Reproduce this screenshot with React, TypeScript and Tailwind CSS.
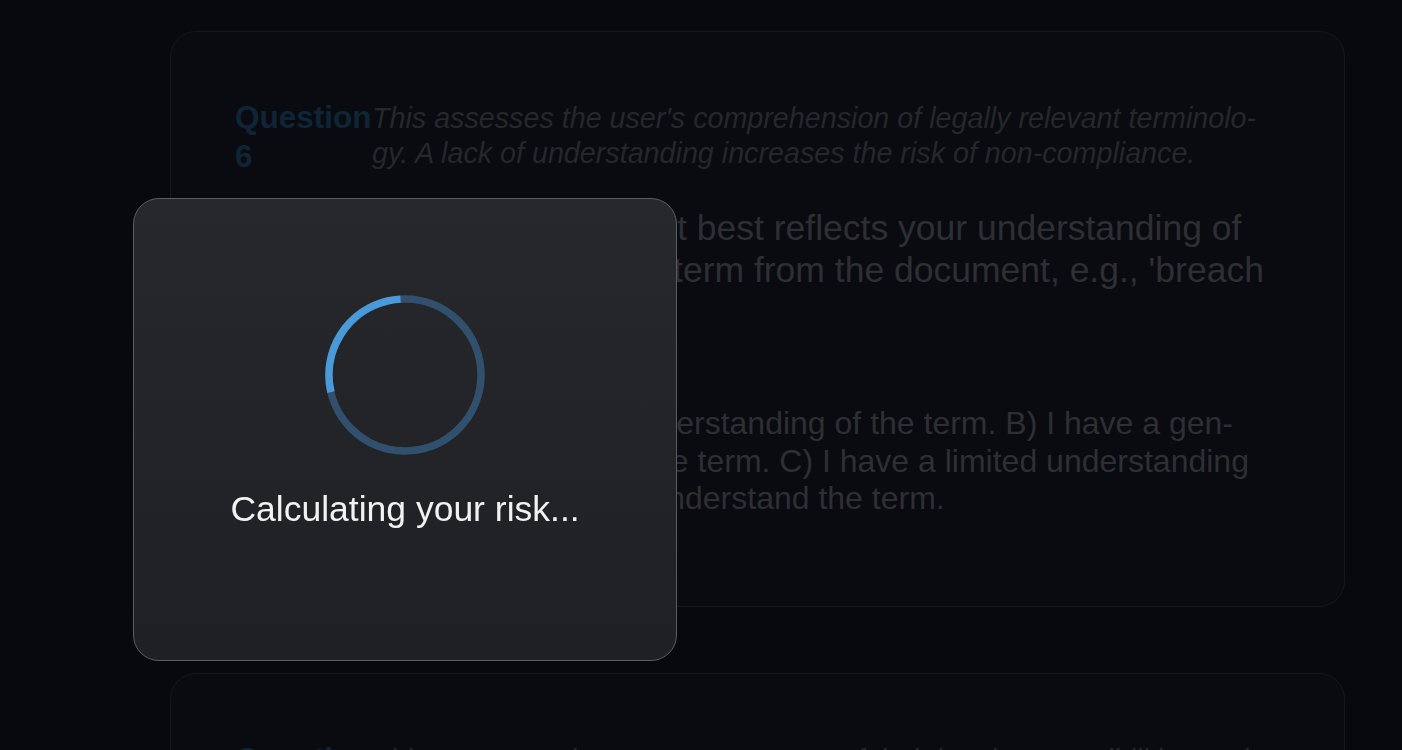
import React from 'react';

function Spinner() {
  return (
    <svg width="164" height="164" viewBox="0 0 164 164">
      <circle cx="82" cy="82" r="76" fill="none" stroke="#31506e" strokeWidth="7.5" />
      <circle
        cx="82"
        cy="82"
        r="76"
        fill="none"
        stroke="#4a9ad9"
        strokeWidth="7.5"
        strokeDasharray="132 1000"
        transform="rotate(167 82 82)"
      />
    </svg>
  );
}

interface QuestionCardProps {
  number: number;
  note: string;
  question: string;
  options: string;
}

function QuestionCard({ number, note, question, options }: QuestionCardProps) {
  return (
    <div className="rounded-[26px] border border-[#15171c] bg-[#090b10] pt-[66px] pl-16 pr-[71px] pb-[88px]">
      <div className="flex items-baseline">
        <div className="w-[137px] shrink-0 text-[31.5px] font-bold leading-[39px] text-[#0f2536]">
          Question {number}
        </div>
        <p className="min-w-0 flex-1 text-[28.7px] italic leading-[35px] text-[#25272b]">{note}</p>
      </div>
      <p className="mt-[31px] text-[35.5px] leading-[42px] text-[#2d2f33]">{question}</p>
      <p className="mt-[72px] text-[32px] leading-[37.5px] text-[#2d2f33]">{options}</p>
    </div>
  );
}

export default function App() {
  return (
    <div className="min-h-screen overflow-hidden bg-[#07090d] font-['Liberation_Sans',Arial,sans-serif]">
      <div className="ml-[170px] flex w-[1175px] flex-col gap-[66px] pt-[31px] pb-16">
        <QuestionCard
          number={6}
          note={"This assesses the user's comprehension of legally relevant terminolo\u00ADgy. A lack of understanding increases the risk of non-compliance."}
          question="Please select the choice that best reflects your understanding of the meaning of this specific term from the document, e.g., 'breach of contract'."
          options={"A) I have a deep, thorough understanding of the term. B) I have a gen\u00ADeral, broad understanding of the term. C) I have a limited understanding of the term. D) I really do not understand the term."}
        />
        <QuestionCard
          number={7}
          note="This assesses the user's awareness of their legal responsibilities and obligations under the agreement."
          question="How confident are you that you understand your obligations under this document?"
          options="A) Very confident. B) Somewhat confident. C) Not very confident. D) Not confident at all."
        />
      </div>

      {/* loading overlay */}
      <div className="fixed left-[133px] top-[198px] flex h-[463px] w-[544px] flex-col items-center rounded-[26px] border-[1.5px] border-[#5b5d62] bg-gradient-to-b from-[#27282c] to-[#1f2024] pt-[94px]">
        <Spinner />
        <div className="mt-[32px] text-[35.5px] leading-[40px] text-[#f2f2f2]">Calculating your risk...</div>
      </div>
    </div>
  );
}
